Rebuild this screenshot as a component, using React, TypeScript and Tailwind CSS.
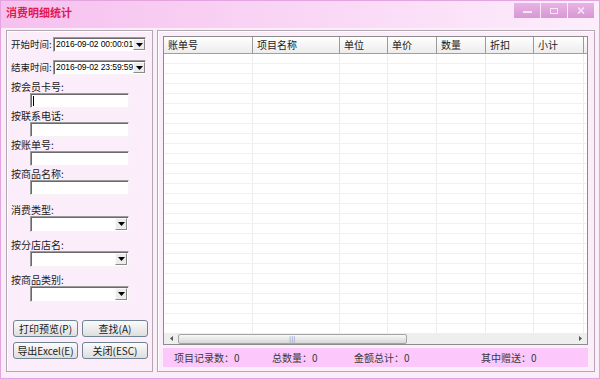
import React from 'react';

// ─── Data ────────────────────────────────────────────────────────────
const columns = [
    { name: '账单号', cls: 'w-[89px]' },
    { name: '项目名称', cls: 'w-[87px]' },
    { name: '单位', cls: 'w-[48px]' },
    { name: '单价', cls: 'w-[49px]' },
    { name: '数量', cls: 'w-[49px]' },
    { name: '折扣', cls: 'w-[48px]' },
    { name: '小计', cls: 'w-[50px]' },
];

const rows = Array.from({ length: 28 }, (_, i) => i);

// ─── Small pieces ────────────────────────────────────────────────────
const DropArrow = () => (
    <div className="flex h-full w-[12px] shrink-0 items-center justify-center border border-t-[#fafafa] border-l-[#fafafa] border-r-[#8a8a8a] border-b-[#8a8a8a] bg-[#ececec]">
        <svg width="7" height="4" viewBox="0 0 7 4">
            <path d="M0 0 H7 L3.5 4 Z" fill="#000" />
        </svg>
    </div>
);

const sunken =
    'border border-t-[#9a9a9a] border-l-[#9a9a9a] border-r-[#f4f4f4] border-b-[#f4f4f4] shadow-[inset_1px_1px_0_#6a6a6a] bg-white';

const TextBox = ({ caret }: { caret?: boolean }) => (
    <div className={`ml-[23px] h-[15px] w-[99px] ${sunken} flex items-center pl-[2px]`}>
        {caret && <div className="h-[10px] w-[1px] bg-black" />}
    </div>
);

const Combo = () => (
    <div className={`ml-[23px] flex h-[16px] w-[99px] justify-end p-[1px] ${sunken}`}>
        <DropArrow />
    </div>
);

const Label = ({ text, mt }: { text: string; mt: string }) => (
    <div className={`${mt} h-[13px] whitespace-nowrap pl-[4px] text-[10px] leading-[13px] text-[#1a1a1a]`}>{text}</div>
);

const DateRow = ({ label, value, mt }: { label: string; value: string; mt: string }) => (
    <div className={`${mt} flex h-[15px] items-center pl-[4px]`}>
        <span className="w-[42px] shrink-0 whitespace-nowrap text-[9.5px] leading-[13px] text-[#1a1a1a]">{label}</span>
        <div className={`flex h-[15px] w-[93px] shrink-0 items-center justify-between p-[1px] pl-[2px] ${sunken}`}>
            <span className="whitespace-nowrap font-['Liberation_Sans',sans-serif] text-[8.5px] leading-none tracking-[-0.1px] text-black">
                {value}
            </span>
            <DropArrow />
        </div>
    </div>
);

const Btn = ({ text, w }: { text: string; w: string }) => (
    <div
        className={`${w} flex h-[17px] items-center justify-center whitespace-nowrap rounded-[3px] border border-[#6f8296] bg-gradient-to-b from-[#fbfbfb] to-[#dedede] text-[10px] text-[#1a1a1a]`}
    >
        {text}
    </div>
);

const WinBtn = ({ children }: { children: React.ReactNode }) => (
    <div className="flex h-[15px] w-[26px] items-center justify-center bg-gradient-to-b from-[#e7b4e4] to-[#d897d5]">
        {children}
    </div>
);

// ─── Component ───────────────────────────────────────────────────────
const App: React.FC = () => {
    return (
        <div className="h-[379px] w-[600px] overflow-hidden border border-[#e4a4e0] bg-[#fbeefa] font-['Noto_Sans_CJK_SC','Liberation_Sans',sans-serif]">
            {/* Title bar */}
            <div className="flex h-[27px] items-start justify-between bg-gradient-to-r from-[#f6c0ef] via-[#f9d6f5] to-[#fdeefc] pl-[5px] pr-[5px]">
                <span className="mt-[4px] text-[11px] font-bold leading-[14px] text-[#e3174f]">消费明细统计</span>
                <div className="mt-[2px] flex gap-[1px]">
                    <WinBtn>
                        <div className="mt-[2px] h-[2px] w-[9px] bg-[#f8e6f7]" />
                    </WinBtn>
                    <WinBtn>
                        <div className="h-[6px] w-[8px] border border-[#f8e6f7]" />
                    </WinBtn>
                    <WinBtn>
                        <svg width="8" height="7" viewBox="0 0 8 7">
                            <path d="M1 0.5 L7 6.5 M7 0.5 L1 6.5" stroke="#f8e6f7" strokeWidth="1.6" />
                        </svg>
                    </WinBtn>
                </div>
            </div>

            {/* Body */}
            <div className="flex gap-[4px] pl-[5px] pt-[2px]">
                {/* Filter panel */}
                <div className="flex h-[342px] w-[147px] flex-col border border-[#b3a8b2] shadow-[inset_1px_1px_0_#ffffff]">
                    <DateRow mt="mt-[6px]" label="开始时间:" value="2016-09-02 00:00:01" />
                    <DateRow mt="mt-[8px]" label="结束时间:" value="2016-09-02 23:59:59" />

                    <Label mt="mt-[5px]" text="按会员卡号:" />
                    <TextBox caret />
                    <Label mt="mt-[1px]" text="按联系电话:" />
                    <TextBox />
                    <Label mt="mt-[1px]" text="按账单号:" />
                    <TextBox />
                    <Label mt="mt-[1px]" text="按商品名称:" />
                    <TextBox />

                    <Label mt="mt-[8px]" text="消费类型:" />
                    <Combo />
                    <Label mt="mt-[6px]" text="按分店店名:" />
                    <Combo />
                    <Label mt="mt-[6px]" text="按商品类别:" />
                    <Combo />

                    <div className="ml-[6px] mt-[18px] flex flex-col gap-[5px]">
                        <div className="flex gap-[4px]">
                            <Btn w="w-[65px]" text="打印预览(P)" />
                            <Btn w="w-[66px]" text="查找(A)" />
                        </div>
                        <div className="flex gap-[4px]">
                            <Btn w="w-[65px]" text="导出Excel(E)" />
                            <Btn w="w-[66px]" text="关闭(ESC)" />
                        </div>
                    </div>
                </div>

                {/* Result panel */}
                <div className="flex h-[342px] w-[438px] flex-col border border-[#b3a8b2] pl-[5px] pt-[5px] shadow-[inset_1px_1px_0_#ffffff]">
                    <div className="flex h-[309px] w-[425px] flex-col border border-[#8c8c8c] bg-white">
                        {/* Header */}
                        <div className="flex h-[17px] border-b border-[#a0a0a0] bg-gradient-to-b from-[#ffffff] to-[#ececec]">
                            {columns.map((c) => (
                                <div
                                    key={c.name}
                                    className={`${c.cls} border-r border-[#9a9a9a] pl-[4px] text-[10px] leading-[16px] text-[#1a1a1a]`}
                                >
                                    {c.name}
                                </div>
                            ))}
                        </div>

                        {/* Rows */}
                        <div className="flex-1 overflow-hidden">
                            {rows.map((r) => (
                                <div key={r} className="flex h-[10px] border-b border-[#f1f1f1]">
                                    {columns.map((c) => (
                                        <div key={c.name} className={`${c.cls} border-r border-[#ededed]`} />
                                    ))}
                                </div>
                            ))}
                        </div>

                        {/* Horizontal scrollbar */}
                        <div className="flex h-[11px] items-center bg-[#eeeeee]">
                            <div className="flex w-[14px] items-center justify-center">
                                <svg width="3" height="5" viewBox="0 0 3 5">
                                    <path d="M3 0 V5 L0 2.5 Z" fill="#555" />
                                </svg>
                            </div>
                            <div className="flex h-[10px] w-[229px] items-center justify-center rounded-[2px] border border-[#a5a5a5] bg-gradient-to-b from-[#f8f8f8] to-[#d8d8d8]">
                                <span className="text-[6px] leading-none tracking-[0.5px] text-[#777]">|||</span>
                            </div>
                            <div className="flex-1" />
                            <div className="flex w-[14px] items-center justify-center">
                                <svg width="3" height="5" viewBox="0 0 3 5">
                                    <path d="M0 0 V5 L3 2.5 Z" fill="#555" />
                                </svg>
                            </div>
                        </div>
                    </div>

                    {/* Status bar */}
                    <div className="mt-[3px] flex h-[19px] w-[425px] items-center bg-[#fcc8fb] text-[10px] text-[#3a3a3a]">
                        <span className="ml-[11px] w-[98px]">项目记录数：0</span>
                        <span className="w-[82px]">总数量：0</span>
                        <span className="w-[127px]">金额总计：0</span>
                        <span>其中赠送：0</span>
                    </div>
                </div>
            </div>
        </div>
    );
};

export default App;
